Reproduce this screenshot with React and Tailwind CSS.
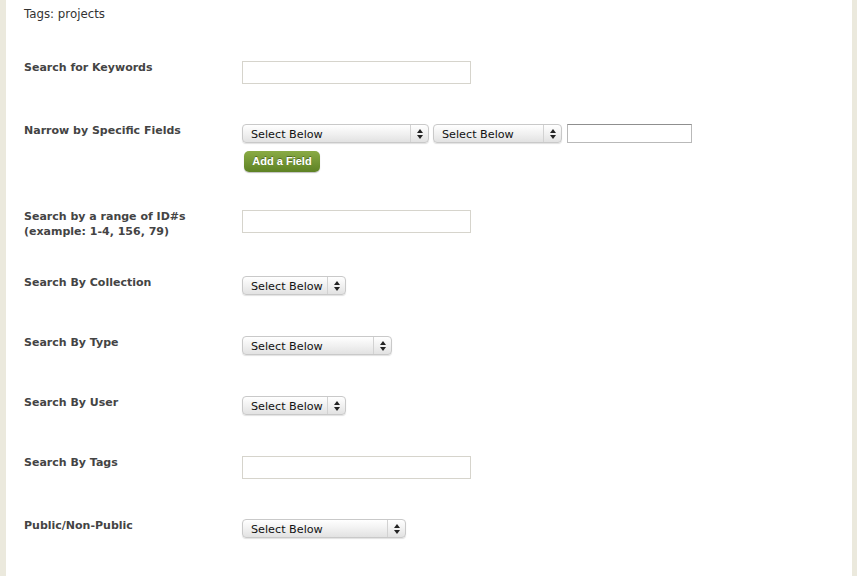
import React from "react";

function Select({ width }) {
  return (
    <div
      className="relative flex h-[19px] items-center rounded-[4px] border border-[#c9c9c9] bg-gradient-to-b from-[#ffffff] via-[#f1f1f1] to-[#e2e2e2] shadow-[0_1px_1px_rgba(0,0,0,0.12)]"
      style={{ width }}
    >
      <span className="flex-1 pl-[8px] pt-[2px] text-[11.2px] leading-none text-[#111]">Select Below</span>
      <div className="flex h-full w-[18px] items-center justify-center border-l border-[#d2d2d2]">
        <svg width="6" height="10" viewBox="0 0 6 10">
          <path d="M3 0L6 4H0z" fill="#222" />
          <path d="M3 10L6 6H0z" fill="#222" />
        </svg>
      </div>
    </div>
  );
}

function TextInput({ width = 229, height = 23 }) {
  return (
    <div
      className="border border-[#d6d4cc] bg-white"
      style={{ width, height }}
    />
  );
}

function Row({ label, children, className = "" }) {
  return (
    <div className={"flex items-start " + className}>
      <div className="-mt-[1px] w-[218px] text-[11px] font-bold leading-[15px] text-[#444]">{label}</div>
      <div>{children}</div>
    </div>
  );
}

export default function App() {
  return (
    <div
      className="flex min-h-[576px] bg-[#ebe9dd]"
      style={{ fontFamily: '"DejaVu Sans", "Liberation Sans", sans-serif' }}
    >
      <main className="ml-[6px] w-[846px] bg-white pl-[18px] pt-[7px]">
        <p className="text-[11.8px] leading-[14px] text-[#333]">Tags: projects</p>

        <Row label="Search for Keywords" className="mt-[40px]">
          <TextInput />
        </Row>

        <Row label="Narrow by Specific Fields" className="mt-[40px]">
          <div className="flex items-center gap-[4px]">
            <Select width={187} />
            <Select width={129} />
            <div className="ml-[1px] h-[19px] w-[125px] border border-[#b9b9b9] border-t-[#8f8f8f] bg-white" />
          </div>
          <button
            className="ml-[2px] mt-[8px] h-[21px] w-[76px] rounded-[5px] bg-gradient-to-b from-[#8aab45] to-[#5e8224] text-[11px] font-bold text-white shadow-[0_1px_1px_rgba(0,0,0,0.25)] [text-shadow:0_-1px_0_rgba(0,0,0,0.35)]"
            style={{ fontFamily: '"Liberation Sans", Arial, sans-serif' }}
          >
            Add a Field
          </button>
        </Row>

        <Row
          label={
            <>
              Search by a range of ID#s
              <br />
              (example: 1-4, 156, 79)
            </>
          }
          className="mt-[38px]"
        >
          <TextInput />
        </Row>

        <Row label="Search By Collection" className="mt-[37px]">
          <Select width={104} />
        </Row>

        <Row label="Search By Type" className="mt-[41px]">
          <Select width={150} />
        </Row>

        <Row label="Search By User" className="mt-[41px]">
          <Select width={104} />
        </Row>

        <Row label="Search By Tags" className="mt-[41px]">
          <TextInput />
        </Row>

        <Row label="Public/Non-Public" className="mt-[40px]">
          <Select width={164} />
        </Row>
      </main>
    </div>
  );
}
